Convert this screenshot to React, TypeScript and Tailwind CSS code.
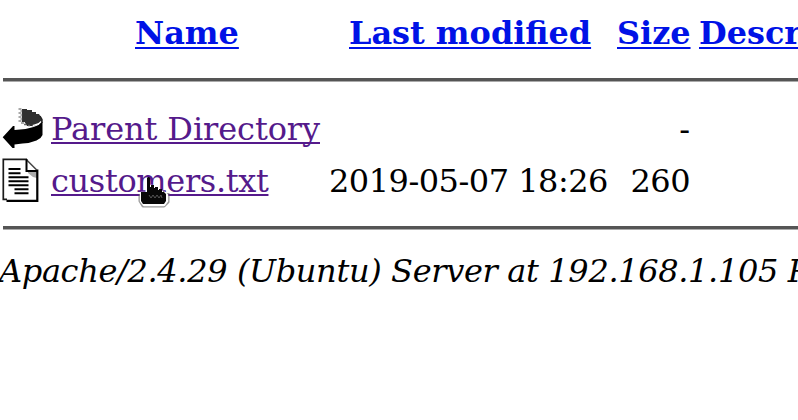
import React from 'react';

const link =
  'inline-block underline decoration-[2px] [text-decoration-skip-ink:none]';

function BackIcon() {
  return (
    <svg className="block h-[42px] w-[42px] shrink-0" viewBox="0 0 42 42" aria-hidden="true">
      <path d="M20 1h5v1h5v2h4v2h3l3 5v4l-4 1h-9l-4-2h-3z" fill="#303030" />
      <path d="M16.5 1h3M18.5 3h2M16.5 5h3M18.5 7h2M16.5 9h3M18.5 11h2M16.5 13h3M19 15h3" fill="none" stroke="#555" strokeWidth="1.2" />
      <path d="M.7 29.3L11 18h1.5v4l11-1 8-2 5-2 3-3h1V27l-2 3-4 2.5-8 2.5-6 .5-8 1v3.5h-2z" fill="#000" />
      <path d="M22 13h14v3l-4 2h-7z" fill="#303030" />
      <path d="M22 16.5h2M26 17.5h2M30 17.5h2" fill="none" stroke="#666" strokeWidth="1.5" />
      <path d="M39.2 13.5l-2.5 2.2-5.7 2" fill="none" stroke="#fff" strokeWidth="1.4" />
      <path d="M38 8l2 3.5V15" fill="none" stroke="#222" strokeWidth="1.4" />
    </svg>
  );
}

function TextIcon() {
  return (
    <svg className="block h-[44px] w-[42px] shrink-0" viewBox="0 0 42 44" aria-hidden="true">
      <path d="M1 1h24l11 11v31H6l-5-2z" fill="#fff" />
      <path d="M26 13h9v7l-4-1-5-4z" fill="#aaa" />
      <path d="M25 1.3H1.3v40H5" fill="none" stroke="#1a1a1a" strokeWidth="1.7" />
      <path d="M4.5 42.8h30.8V11.5" fill="none" stroke="#000" strokeWidth="2.2" />
      <path d="M24 1.3l11 11" fill="none" stroke="#444" strokeWidth="1.5" />
      <path d="M24.5 1v12h11" fill="none" stroke="#000" strokeWidth="2" />
      <path d="M6.5 11h12M6.5 15.3h12M6.5 19.3h20M6.5 23.3h20M6.5 27.3h20M12.5 31.3h14M12.5 35.3h14" fill="none" stroke="#000" strokeWidth="2" />
    </svg>
  );
}

function PointerCursor() {
  return (
    <svg
      className="absolute left-[87px] top-[13px] h-[36px] w-[34px]"
      viewBox="0 0 34 36"
      aria-hidden="true"
    >
      <path d="M2 20v7l3 5h21l4-4v-9" fill="none" stroke="#555" strokeOpacity=".6" strokeWidth="3" strokeLinejoin="round" />
      <path d="M3 19h6V12h5v3l6 2 5 1 4 3v6l-3 4H6l-3-4z" fill="#fff" stroke="#fff" strokeWidth="2.4" strokeLinejoin="round" />
      <path d="M3 18h6V4l1-1h1l1 1v9h1v-2h3v3h1v-1h3v3h1v-1h3v3h1v-1l3 3v7l-2 3H5l-2-3z" fill="#080808" />
      <path d="M11 21l2 3 2-3 2 3 2-3 2 3 2-3 1 3" fill="none" stroke="#555" strokeWidth="1" />
    </svg>
  );
}

export default function App() {
  return (
    <main className="h-[420px] w-[798px] overflow-hidden bg-white pt-[13px] font-['DejaVu_Serif',serif] text-[32px] leading-[40px] whitespace-nowrap text-black">
      <div className="grid h-[65px] grid-cols-[349px_268px_82px_250px] text-[31.9px] font-bold text-[#0012e6]">
        <div className="pl-[135px]"><a className={`${link} underline-offset-[3px]`}>Name</a></div>
        <div><a className={`${link} underline-offset-[3px]`}>Last modified</a></div>
        <div><a className={`${link} underline-offset-[3px]`}>Size</a></div>
        <div><a className={`${link} underline-offset-[3px]`}>Description</a></div>
      </div>
      <hr className="ml-[3px] h-[4px] border-0 border-b border-b-[#aaa] bg-[#555]" />
      <div className="grid h-[52px] w-[690px] grid-cols-[329px_279px_82px] pt-[27px]">
        <div className="flex items-start pl-[2px]">
          <div className="-mt-[1px]"><BackIcon /></div>
          <a className={`${link} ml-[7px] text-[#551a8b] tracking-[-0.1px] underline-offset-[2px]`}>Parent Directory</a>
        </div>
        <div />
        <div className="text-right">-</div>
      </div>
      <div className="grid h-[92px] w-[690px] grid-cols-[329px_279px_82px] pt-[27px]">
        <div className="flex items-start pl-[2px]">
          <div className="-mt-[3px]"><TextIcon /></div>
          <a className={`${link} relative ml-[7px] text-[#551a8b] tracking-[-0.35px] underline-offset-[2px]`}>
            customers.txt
            <PointerCursor />
          </a>
        </div>
        <div className="tracking-[-0.5px]">2019-05-07 18:26</div>
        <div className="text-right tracking-[-0.5px]">260</div>
      </div>
      <hr className="ml-[3px] h-[4px] border-0 border-b border-b-[#aaa] bg-[#555]" />
      <address className="-ml-[1px] pt-[21px] tracking-[-0.35px] italic">
        Apache/2.4.29 (Ubuntu) Server at 192.168.1.105 Port 80
      </address>
    </main>
  );
}
